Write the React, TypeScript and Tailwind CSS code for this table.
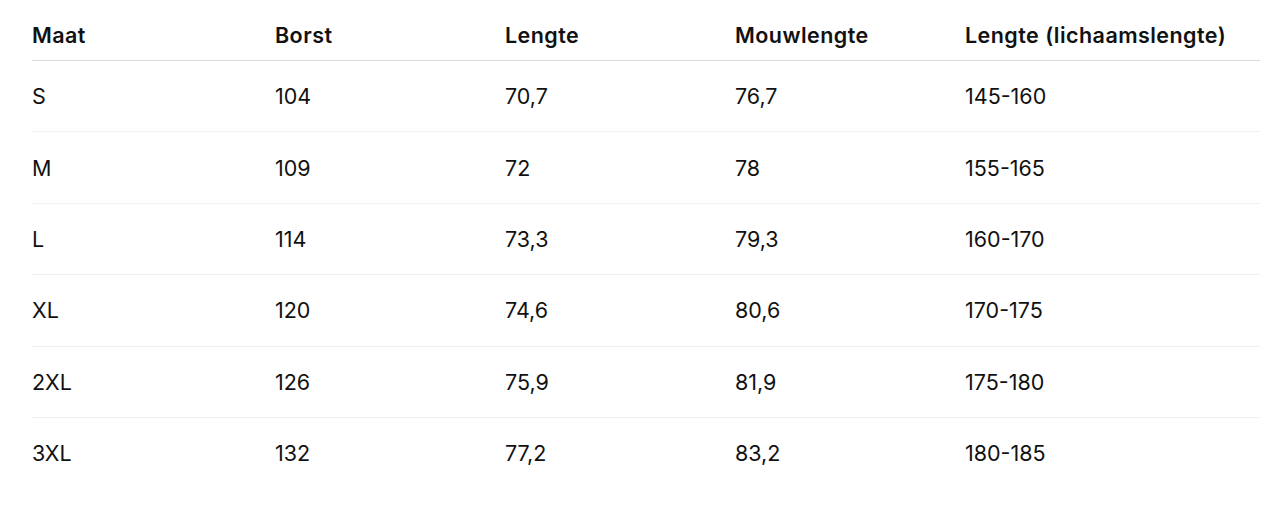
const columns = ["Maat", "Borst", "Lengte", "Mouwlengte", "Lengte (lichaamslengte)"];

const rows = [
  ["S", "104", "70,7", "76,7", "145-160"],
  ["M", "109", "72", "78", "155-165"],
  ["L", "114", "73,3", "79,3", "160-170"],
  ["XL", "120", "74,6", "80,6", "170-175"],
  ["2XL", "126", "75,9", "81,9", "175-180"],
  ["3XL", "132", "77,2", "83,2", "180-185"],
];

export default function App() {
  return (
    <div className="min-h-[510px] bg-white px-8 pt-[21px] font-['Inter','Liberation_Sans',sans-serif] text-[#111]">
      <table className="w-[1228px] table-fixed border-collapse text-left">
        <colgroup>
          <col className="w-[243px]" />
          <col className="w-[230px]" />
          <col className="w-[230px]" />
          <col className="w-[230px]" />
          <col />
        </colgroup>

        <thead>
          <tr className="border-b border-[#dcdcdc]">
            {columns.map((col) => (
              <th
                key={col}
                className="pb-[11px] text-[21.5px] leading-7 font-semibold tracking-[0.45px]"
              >
                {col}
              </th>
            ))}
          </tr>
        </thead>

        <tbody>
          {rows.map((row, i) => (
            <tr
              key={row[0]}
              className={i < rows.length - 1 ? "border-b border-[#f0f0f0]" : ""}
            >
              {row.map((cell, j) => (
                <td key={j} className="py-[21.2px] text-[21.5px] leading-7 font-normal">
                  {cell}
                </td>
              ))}
            </tr>
          ))}
        </tbody>
      </table>
    </div>
  );
}
